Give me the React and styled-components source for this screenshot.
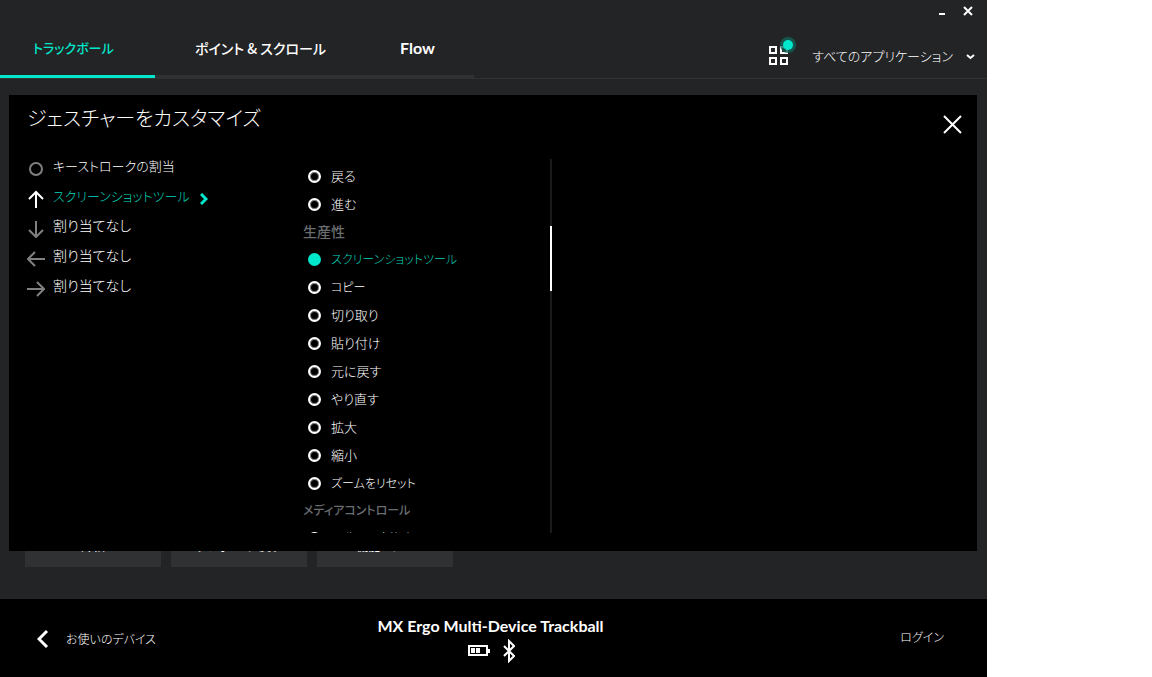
import React, { useState } from 'react';
import styled, { createGlobalStyle } from 'styled-components';

const GlobalStyle = createGlobalStyle`
* {
  box-sizing: border-box;
}

body {
  margin: 0;
  padding-right: 165px;
  background: #ffffff;
  color: #ffffff;
  font-family: "Noto Sans CJK JP", sans-serif;
  font-feature-settings: "palt";
  font-weight: 300;
}

button {
  padding: 0;
  border: 0;
  background: none;
  color: inherit;
  font: inherit;
  font-feature-settings: inherit;
  cursor: pointer;
}

svg {
  display: block;
  flex: none;
}
`

const Window = styled.div`
display: flex;
flex-direction: column;
min-height: 100vh;
background: #232426;
`

const TitleBar = styled.header`
display: flex;
justify-content: flex-end;
gap: 17px;
height: 22px;
padding: 6px 14px 0 0;

button {
  height: 10px;
}
`

const NavBar = styled.div`
display: flex;
justify-content: space-between;
height: 57px;
border-bottom: 1px solid #303133;
`

const Tabs = styled.nav`
display: flex;
`

const Tab = styled.button`
min-width: ${(props) => props.$width}px;
padding: 0 30px 2px ${(props) => (props.$active ? 33 : 40)}px;
border-bottom: 3px solid ${(props) => (props.$active ? "#00e7cb" : "#303133")};
color: ${(props) => (props.$active ? "#00e7cb" : "#ffffff")};
font-size: ${(props) => (props.$active ? 13 : 14)}px;
font-weight: 500;
line-height: 50px;
text-align: left;
white-space: nowrap;

&[lang="en"] {
  font-family: Lato, sans-serif;
  font-size: 16px;
  font-weight: 700;
}
`

const AppPicker = styled.button`
display: flex;
align-items: center;
padding: 11px 12px 0 0;
font-size: 13px;
white-space: nowrap;

span {
  margin: 0 13px 0 16px;
}
`

const Stage = styled.main`
position: relative;
display: flex;
flex: 1;
flex-direction: column;
justify-content: flex-end;
min-height: 520px;
padding: 0 25px 32px;
`

const Actions = styled.div`
display: flex;
gap: 10px;
`

const ActionButton = styled.button`
width: 136px;
height: 44px;
background: #303133;
font-size: 12px;
font-weight: 500;
`

const Dialog = styled.section`
position: absolute;
inset: 16px 10px 48px 9px;
display: flex;
flex-direction: column;
padding: 8px 15px 18px 18px;
background: #000000;
`

const DialogHeader = styled.div`
display: flex;
align-items: flex-start;
justify-content: space-between;

button {
  padding-top: 12px;
}
`

const Title = styled.h1`
margin: 0;
font-size: 20px;
font-weight: 300;
line-height: 30px;
`

const Columns = styled.div`
display: grid;
flex: 1;
grid-template-columns: 276px 249px;
min-height: 0;
padding-top: 20px;
`

const Gestures = styled.ul`
margin: 0;
padding: 0;
list-style: none;
`

const Gesture = styled.button`
display: flex;
align-items: center;
height: 30px;
color: ${(props) => (props.$active ? "#00d6bc" : "#ffffff")};
font-size: ${(props) => (props.$kana ? 13 : 14)}px;
white-space: nowrap;

span {
  padding: 0 10px 8px 8px;
}
`

const Scroller = styled.div`
display: flex;
justify-content: space-between;
height: 374px;
margin-top: 5px;
`

const Options = styled.div`
flex: 1;
height: 374px;
padding-top: 3px;
overflow: hidden;
`

const GroupTitle = styled.h2`
margin: 0;
padding: 1px 0 2px;
color: #6a6d70;
font-size: ${(props) => (props.$kana ? 12 : 14)}px;
font-weight: 500;
line-height: 24px;
`

const Option = styled.label`
display: flex;
align-items: center;
gap: 10px;
height: 28px;
padding-left: 5px;
color: ${(props) => (props.$active ? "#00d6bc" : "#ffffff")};
font-size: ${(props) => (props.$kana ? 12 : 13)}px;
white-space: nowrap;
cursor: pointer;

span {
  padding-bottom: 2px;
}

input {
  appearance: none;
  width: 13px;
  height: 13px;
  margin: 0;
  border: 2px solid #ffffff;
  border-radius: 50%;
  box-shadow: inset 0 0 0 1px #808080;
}

input:checked {
  border-color: #00e7cb;
  background: #00e7cb;
  box-shadow: none;
}
`

const Track = styled.div`
width: 2px;
padding-top: 67px;
background: #1b1b1b;
`

const Thumb = styled.div`
height: 65px;
background: #ffffff;
`

const Footer = styled.footer`
display: grid;
grid-template-columns: 1fr auto 1fr;
height: 78px;
padding: 0 43px 0 37px;
background: #000000;
font-size: 12px;
`

const Back = styled.button`
display: flex;
align-items: center;
justify-self: start;
gap: 17px;
padding-top: 1px;
`

const Device = styled.div`
display: flex;
flex-direction: column;
align-items: center;
padding-top: 15px;
font-family: Lato, sans-serif;
font-size: 16px;
font-weight: 700;
line-height: 24px;
`

const Status = styled.div`
display: flex;
align-items: center;
gap: 13px;
padding: 1px 0 0 2px;
`

const Login = styled.a`
justify-self: end;
color: #ffffff;
line-height: 76px;
text-decoration: none;
`

const icons = {
  none: <circle cx="9" cy="9" r="6" />,
  up: <path d="M9 18V2M2 9l7-7 7 7" />,
  down: <path d="M9 1v16M2 10l7 7 7-7" />,
  left: <path d="M18 9H1M8 2L1 9l7 7" />,
  right: <path d="M0 9h17M10 2l7 7-7 7" />,
};

const gestures = [
  { icon: "none", label: "キーストロークの割当", kana: true },
  { icon: "up", label: "スクリーンショットツール", kana: true },
  { icon: "down", label: "割り当てなし" },
  { icon: "left", label: "割り当てなし" },
  { icon: "right", label: "割り当てなし" },
];

const groups = [
  { items: ["戻る", "進む"] },
  {
    title: "生産性",
    items: [
      "スクリーンショットツール", "コピー", "切り取り", "貼り付け", "元に戻す",
      "やり直す", "拡大", "縮小", "ズームをリセット",
    ],
  },
  { title: "メディアコントロール", items: ["再生/一時停止"] },
];

const isKana = (text) => /^[\u3040-\u30ff]+$/.test(text);

const App = () => {
  const [gesture, setGesture] = useState(1);
  const [action, setAction] = useState("スクリーンショットツール");

  return (
    <>
      <GlobalStyle />
      <Window lang="ja">
        <TitleBar>
          <button aria-label="最小化">
            <svg width="8" height="10"><path d="M1 8h6" stroke="#fff" strokeWidth="2" /></svg>
          </button>
          <button aria-label="閉じる">
            <svg width="10" height="10"><path d="M1 1l8 8M9 1L1 9" stroke="#fff" strokeWidth="2" /></svg>
          </button>
        </TitleBar>
        <NavBar>
          <Tabs>
            <Tab $active $width={155}>トラックボール</Tab>
            <Tab $width={205}>ポイント &amp; スクロール</Tab>
            <Tab $width={114} lang="en">Flow</Tab>
          </Tabs>
          <AppPicker>
            <svg width="28" height="37" fill="none" stroke="#fff" strokeWidth="2">
              <path d="M2 10h6v6H2zM13 10h6v6h-6zM2 21h6v6H2zM13 21h6v6h-6z" />
              <circle cx="20" cy="8" r="8" fill="#126158" fillOpacity="0.8" stroke="none" />
              <circle cx="20" cy="8" r="5" fill="#00e7cb" stroke="none" />
            </svg>
            <span>すべてのアプリケーション</span>
            <svg width="9" height="8" fill="none" stroke="#fff" strokeWidth="2"><path d="M1 3l3.500 3L8 3" /></svg>
          </AppPicker>
        </NavBar>
        <Stage>
          <Actions>
            <ActionButton>詳細</ActionButton>
            <ActionButton>デフォルトに戻す</ActionButton>
            <ActionButton>機能ツアー</ActionButton>
          </Actions>
          <Dialog role="dialog" aria-labelledby="dialog-title">
            <DialogHeader>
              <Title id="dialog-title">ジェスチャーをカスタマイズ</Title>
              <button aria-label="閉じる">
                <svg width="19" height="19"><path d="M1 1l17 17M18 1L1 18" stroke="#fff" strokeWidth="2" /></svg>
              </button>
            </DialogHeader>
            <Columns>
              <Gestures>
                {gestures.map(({ icon, label, kana }, i) => (
                  <li key={icon}>
                    <Gesture $active={i === gesture} $kana={kana} onClick={() => setGesture(i)}>
                      <svg width="18" height="18" fill="none" stroke={i === gesture ? "#fff" : "#808080"} strokeWidth="2">
                        {icons[icon]}
                      </svg>
                      <span>{label}</span>
                      {i === gesture && (
                        <svg width="8" height="12" fill="none" stroke="#00e7cb" strokeWidth="3"><path d="M1 1l5 5-5 5" /></svg>
                      )}
                    </Gesture>
                  </li>
                ))}
              </Gestures>
              <Scroller>
                <Options>
                  {groups.map(({ title, items }, i) => (
                    <div key={i} role="group" aria-label={title}>
                      {title && <GroupTitle $kana={isKana(title)}>{title}</GroupTitle>}
                      {items.map((item) => (
                        <Option key={item} $active={item === action} $kana={isKana(item)}>
                          <input type="radio" name="action" checked={item === action} onChange={() => setAction(item)} />
                          <span>{item}</span>
                        </Option>
                      ))}
                    </div>
                  ))}
                </Options>
                <Track>
                  <Thumb />
                </Track>
              </Scroller>
            </Columns>
          </Dialog>
        </Stage>
        <Footer>
          <Back>
            <svg width="12" height="20" fill="none" stroke="#fff" strokeWidth="3"><path d="M10 2l-8 8 8 8" /></svg>
            お使いのデバイス
          </Back>
          <Device lang="en">
            MX Ergo Multi-Device Trackball
            <Status>
              <svg width="22" height="12" fill="#fff">
                <path d="M1 1h18v9H1z" fill="none" stroke="#fff" strokeWidth="2" />
                <path d="M3 3h4v5H3zM8 3h4v5H8zM20 4h2v4h-2z" />
              </svg>
              <svg width="12" height="24" fill="none" stroke="#fff" strokeWidth="2">
                <path d="M1 7l10 10-5 5V2l5 5L1 17" />
              </svg>
            </Status>
          </Device>
          <Login href="#login">ログイン</Login>
        </Footer>
      </Window>
    </>
  );
};

export default App;
